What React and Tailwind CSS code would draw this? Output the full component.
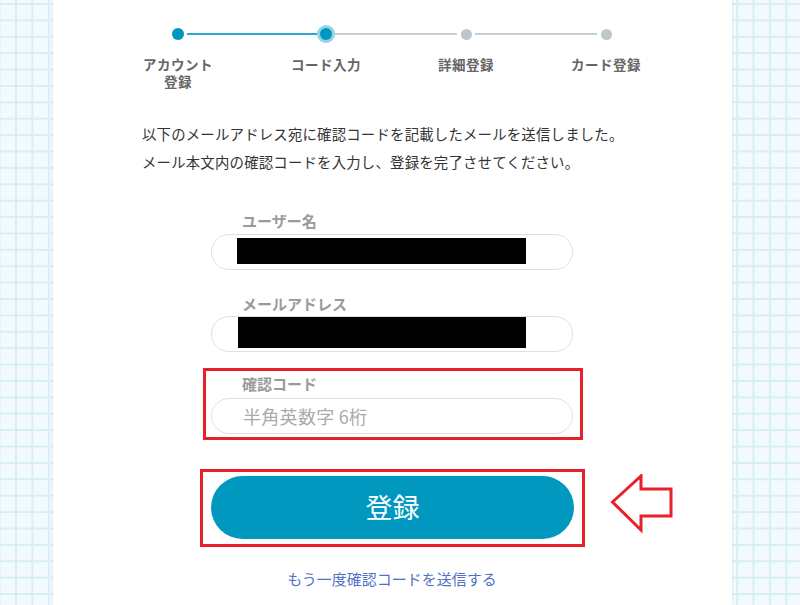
const font = { fontFamily: '"Noto Sans CJK JP", "Noto Sans", sans-serif' };

function Steps() {
    return (
        <div>
            <div className="ml-[116px] flex h-[18px] items-center">
                <span className="flex h-[18px] w-[18px] items-center justify-center">
                    <span className="h-[12px] w-[12px] rounded-full bg-[#0097bf]" />
                </span>
                <span className="h-[2px] w-[130px] bg-[#2aa8d0]" />
                <span className="flex h-[18px] w-[18px] items-center justify-center rounded-full bg-[#8fd4ea]">
                    <span className="h-[12px] w-[12px] rounded-full bg-[#0097bf]" />
                </span>
                <span className="h-[2px] w-[122px] bg-[#c6cfd3]" />
                <span className="flex h-[18px] w-[18px] items-center justify-center">
                    <span className="h-[11px] w-[11px] rounded-full bg-[#bcc6cb]" />
                </span>
                <span className="h-[2px] w-[122px] bg-[#c6cfd3]" />
                <span className="flex h-[18px] w-[18px] items-center justify-center">
                    <span className="h-[11px] w-[11px] rounded-full bg-[#bcc6cb]" />
                </span>
            </div>
            <div className="ml-[75px] mt-[13px] flex text-center text-[13.5px] font-bold leading-[17px] tracking-[0.5px] text-[#666]">
                <div className="w-[100px]">
                    アカウント
                    <br />
                    登録
                </div>
                <div className="ml-[48px] w-[100px]">コード入力</div>
                <div className="ml-[40px] w-[100px]">詳細登録</div>
                <div className="ml-[40px] w-[100px]">カード登録</div>
            </div>
        </div>
    );
}

function Label({ children }) {
    return <div className="pl-[31px] text-[15px] font-bold leading-[20px] text-[#9a9a9a]">{children}</div>;
}

function Arrow() {
    return (
        <svg width="64" height="60" viewBox="0 0 64 60" className="ml-[25px] mt-[-8px]">
            <path
                d="M2.5 28 L31 2 L31 15 L61 15 L61 42 L31 42 L31 56 Z"
                fill="#fff"
                stroke="#e8202a"
                strokeWidth="3"
                strokeLinejoin="miter"
            />
        </svg>
    );
}

export default function App() {
    return (
        <div
            className="flex h-[605px] w-[800px] overflow-hidden bg-[#f2fafe] bg-[linear-gradient(#d6eef8_1.5px,transparent_1.5px),linear-gradient(90deg,#d6eef8_1.5px,transparent_1.5px)] bg-[size:16.4px_16.4px] bg-[position:15px_3px]"
            style={font}
        >
            <div className="ml-[53px] h-full w-[679px] bg-white pt-[25px] shadow-[0_0_3px_rgba(0,0,0,0.12)]">
                <Steps />

                <p className="ml-[89px] mt-[30px] whitespace-nowrap text-[14.4px] leading-[28px] tracking-[0.2px] text-[#333]">
                    以下のメールアドレス宛に確認コードを記載したメールを送信しました。
                    <br />
                    メール本文内の確認コードを入力し、登録を完了させてください。
                </p>

                <div className="ml-[158px] mt-[35px] w-[362px]">
                    <Label>ユーザー名</Label>
                    <div className="mt-[3px] h-[36px] rounded-full border border-[#dedede] pl-[25px] pt-[3px]">
                        <div className="h-[26px] w-[289px] bg-black" />
                    </div>

                    <div className="mt-[24px]">
                        <Label>メールアドレス</Label>
                    </div>
                    <div className="mt-[2px] h-[36px] rounded-full border border-[#dedede] pl-[26px]">
                        <div className="h-[31px] w-[288px] bg-black" />
                    </div>
                </div>

                <div className="ml-[150px] mt-[16px] w-[380px] border-[3px] border-[#e8202a] pb-[3px] pl-[5px] pr-[7px] pt-[3px]">
                    <Label>確認コード</Label>
                    <div className="mt-[4px] flex h-[36px] items-center rounded-full border border-[#dedede] pl-[31px] text-[18px] tracking-[0.3px] text-[#aaa]">
                        半角英数字 6桁
                    </div>
                </div>

                <div className="ml-[147px] mt-[29px] flex items-center">
                    <div className="w-[385px] border-[3px] border-[#e8202a] pb-[5px] pl-[8px] pt-[4px]">
                        <button className="flex h-[63px] w-[363px] items-center justify-center rounded-full bg-[#0098bf] text-[27px] text-white">
                            登録
                        </button>
                    </div>
                    <Arrow />
                </div>

                <div className="ml-[158px] mt-[22px] w-[362px] text-center text-[15px] leading-[20px] text-[#5470c6]">
                    もう一度確認コードを送信する
                </div>
            </div>
        </div>
    );
}
